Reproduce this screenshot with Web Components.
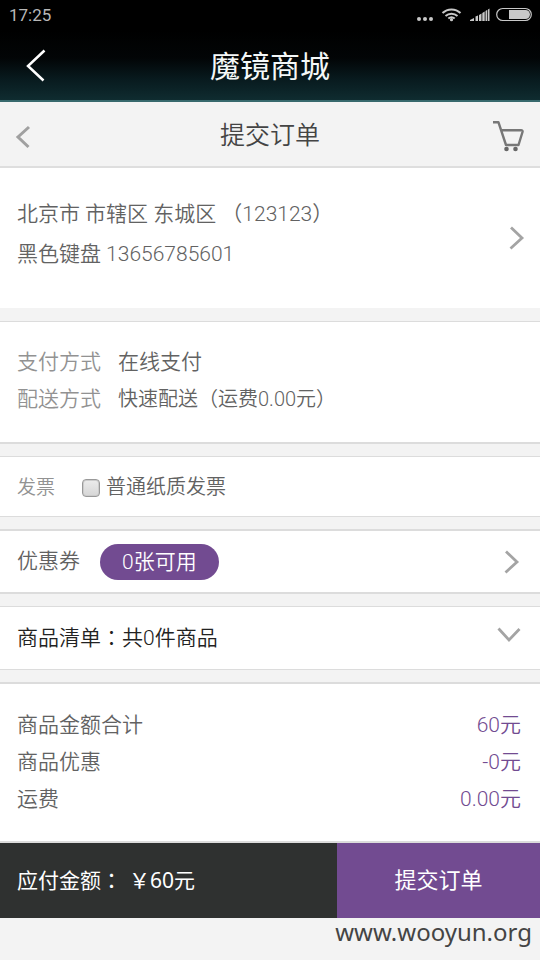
<!DOCTYPE html>
<html lang="zh-CN">
<head>
<meta charset="utf-8">
<meta name="viewport" content="width=device-width, initial-scale=1">
<title>提交订单</title>
<style>
  html { min-height: 100%; background: #f3f3f3; }
  body {
    margin: 0;
    background: #f3f3f3;
    color: #626262;
    font: 350 21px/37px Roboto, "Noto Sans CJK SC", sans-serif;
  }
</style>
</head>
<body>
<order-page></order-page>

<script>
const define = (name, html, setup) => {
  const template = document.createElement('template');
  template.innerHTML = html;
  customElements.define(name, class extends HTMLElement {
    constructor() {
      super();
      this.attachShadow({ mode: 'open' }).append(template.content.cloneNode(true));
    }
    connectedCallback() { if (setup) setup(this); }
  });
};

define('status-bar', `
  <style>
    :host { display: flex; align-items: center; justify-content: space-between; height: 30px; padding: 0 8px 0 9px; background: #000; color: #b8b8b8; font: 400 17px/30px Roboto, sans-serif; }
    svg { display: block; }
  </style>
  <span>17:25</span>
  <svg width="116" height="30" viewBox="416 0 116 30" aria-hidden="true" fill="#c8c8c8">
    <circle cx="419" cy="19" r="2"/><circle cx="425" cy="19" r="2"/><circle cx="431" cy="19" r="2"/>
    <g fill="none" stroke="#c8c8c8" stroke-width="2">
      <path d="M442.500 13a13 13 0 0 1 18 0M445.500 16a9 9 0 0 1 12 0M448.300 18.600a5 5 0 0 1 6.400 0"/>
      <rect x="496.700" y="8.500" width="34.600" height="12" rx="6" stroke-width="1.200"/>
    </g>
    <circle cx="451.500" cy="19.700" r="1.600"/>
    <path d="M470 21v-1l4-2v3zM475.500 21v-4.500l2.500-1V21zM479 21v-6l2.500-1.500V21zM482.300 21v-8l2.400-1.500V21zM485.500 21V11l1.800-1.200V21zM488 21V9.500l1.500-1V21z"/>
    <path d="M509 10h16.500a4.500 4.500 0 0 1 0 9H509z"/>
  </svg>
`);

define('app-header', `
  <style>
    :host { display: grid; grid-template-columns: 72px 1fr 72px; align-items: center; height: 70px; border-bottom: 2px solid #38696d; background: linear-gradient(#000 0, #020506 40%, #081a1e 70%, #0f2c30); color: #f4f8f8; }
    button { display: block; width: 72px; height: 70px; padding: 0; border: 0; background: none; }
    svg { display: block; }
    h1 { margin: 0; padding-top: 4px; text-align: center; font-size: 30px; line-height: 40px; font-weight: 400; }
  </style>
  <button aria-label="返回"><svg width="72" height="70" viewBox="0 30 72 70"><path d="M44.500 50.500 28 66l15.500 14.500" fill="none" stroke="#fff" stroke-width="2.500"/></svg></button>
  <h1><slot></slot></h1>
`);

define('page-title', `
  <style>
    :host { display: grid; grid-template-columns: 64px 1fr 64px; align-items: center; height: 64px; border-bottom: 2px solid #dedede; background: #f3f3f3; color: #444; }
    button { display: block; width: 64px; height: 64px; padding: 0; border: 0; background: none; }
    svg { display: block; fill: none; }
    h2 { margin: 0; padding-top: 4px; text-align: center; font-size: 25px; line-height: 40px; font-weight: inherit; }
  </style>
  <button aria-label="返回"><svg width="64" height="64" viewBox="0 102 64 64"><path d="M29 127 18 137l10.500 10" stroke="#a0a0a0" stroke-width="3"/></svg></button>
  <h2><slot></slot></h2>
  <button aria-label="购物车"><svg width="64" height="64" viewBox="476 102 64 64"><g stroke="#777" stroke-width="2.400" stroke-linejoin="round"><path d="M493 122.300h5.500l7.500 22.700h12.500l4-13q.5-1.800-1.500-1.800H501.500"/></g><circle cx="506.500" cy="149" r="2.300" fill="#666"/><circle cx="515.500" cy="149" r="2.300" fill="#666"/></svg></button>
`);

define('order-card', `
  <style>
    :host { display: block; background: #fff; border-top: 1px solid #dcdcdc; border-bottom: 1px solid #dcdcdc; margin-bottom: 12px; }
    :host([flush]) { border-top: 0; border-bottom-color: #f3f3f3; }
    :host([base]) { border-bottom-width: 2px; }
    :host([head]) { border-top-width: 2px; }
    :host([last]) { margin-bottom: 0; }
  </style>
  <slot></slot>
`);

define('chevron-button', `
  <style>
    :host { display: block; }
    button { display: block; padding: 0; border: 0; background: none; }
    svg { display: block; }
    :host([down]) svg { transform: rotate(90deg); }
  </style>
  <button><svg width="24" height="24" viewBox="0 0 24 24"><path d="M7 1.500 18 12 6.500 22.500" fill="none" stroke="#a4a4a4" stroke-width="2.800"/></svg></button>
`, el => el.shadowRoot.querySelector('button').setAttribute('aria-label', el.getAttribute('label')));

define('delivery-address', `
  <style>
    :host { display: flex; align-items: center; justify-content: space-between; padding: 0 12px 0 17px; }
    address { padding: 26px 0 34px; font-style: normal; line-height: 40px; }
    p { margin: 0; }
  </style>
  <address><p><slot name="area"></slot></p><p><slot name="contact"></slot></p></address>
  <chevron-button label="选择地址"></chevron-button>
`);

define('order-methods', `
  <style>
    :host { display: block; padding: 22px 17px 24px; }
    dl { display: grid; grid-template-columns: auto 1fr; column-gap: 17px; margin: 0; }
    dt { color: #929292; }
    dd { margin: 0; }
    .small { font-size: 20px; }
  </style>
  <dl><dt>支付方式</dt><dd>在线支付</dd><dt>配送方式</dt><dd class="small">快速配送（运费0.00元）</dd></dl>
`);

define('invoice-option', `
  <style>
    :host { display: flex; align-items: center; gap: 27px; padding: 12px 17px 10px; font-size: 19px; }
    .name { color: #929292; }
    label { display: flex; align-items: center; gap: 6px; font-size: 20px; }
    input { appearance: none; width: 18px; height: 18px; margin: 0; border: 1px solid #999; border-radius: 4px; background: linear-gradient(#ececec, #d6d6d6); box-shadow: inset 0 0 0 1px #ccc; }
  </style>
  <span class="name">发票</span>
  <label><input type="checkbox">普通纸质发票</label>
`);

define('coupon-row', `
  <style>
    :host { display: flex; align-items: center; padding: 12px 17px 12px 17px; }
    button { height: 36px; margin-left: 20px; padding: 0 22px; border: 0; border-radius: 18px; background: #724b91; color: #fff; font: inherit; line-height: 36px; }
    chevron-button { margin-left: auto; }
  </style>
  <span>优惠券</span><button>0张可用</button>
  <chevron-button label="选择优惠券"></chevron-button>
`);

define('goods-list', `
  <style>
    :host { display: flex; align-items: center; justify-content: space-between; padding: 13px 19px 12px 17px; color: #222; }
    chevron-button { padding-bottom: 10px; }
    .mid { font-family: "Noto Sans CJK TC", sans-serif; line-height: 1; }
  </style>
  <span>商品清单<span class="mid" lang="zh-TW">：</span>共0件商品</span>
  <chevron-button down label="展开商品清单"></chevron-button>
`);

define('price-summary', `
  <style>
    :host { display: block; padding: 23px 19px 23px 17px; }
    dl { display: grid; grid-template-columns: 1fr auto; margin: 0; }
    dd { margin: 0; text-align: right; color: #724b91; }
  </style>
  <dl><dt>商品金额合计</dt><dd>60元</dd><dt>商品优惠</dt><dd>-0元</dd><dt>运费</dt><dd>0.00元</dd></dl>
`);

define('checkout-bar', `
  <style>
    :host { display: grid; grid-template-columns: 337fr 203fr; background: #2f3130; color: #fff; line-height: 75px; font-weight: 400; }
    .total { display: flex; gap: 7px; padding-left: 17px; font-family: "Noto Sans", "Noto Sans CJK SC", sans-serif; }
    .mid { font-family: "Noto Sans CJK TC", sans-serif; line-height: 1; }
    button { padding: 0; border: 0; background: #724b91; color: #fff; font: inherit; font-size: 22px; line-height: 75px; }
  </style>
  <div class="total"><span>应付金额<span class="mid" lang="zh-TW">：</span></span><span>￥60元</span></div>
  <button>提交订单</button>
`);

define('site-mark', `
  <style>
    :host { display: block; padding: 0 8px 14px; text-align: right; color: #444; font: 400 24px/28px "Noto Sans", sans-serif; }
  </style>
  <slot></slot>
`);

define('order-page', `
  <style>:host { display: block; } main { display: block; }</style>
  <status-bar></status-bar>
  <app-header>魔镜商城</app-header>
  <page-title>提交订单</page-title>
  <main>
    <order-card flush><delivery-address><span slot="area">北京市 市辖区 东城区 （123123）</span><span slot="contact">黑色键盘 13656785601</span></delivery-address></order-card>
    <order-card base><order-methods></order-methods></order-card>
    <order-card><invoice-option></invoice-option></order-card>
    <order-card head base><coupon-row></coupon-row></order-card>
    <order-card><goods-list></goods-list></order-card>
    <order-card head base last><price-summary></price-summary></order-card>
    <checkout-bar></checkout-bar>
  </main>
  <site-mark>www.wooyun.org</site-mark>
`);
</script>
</body>
</html>
